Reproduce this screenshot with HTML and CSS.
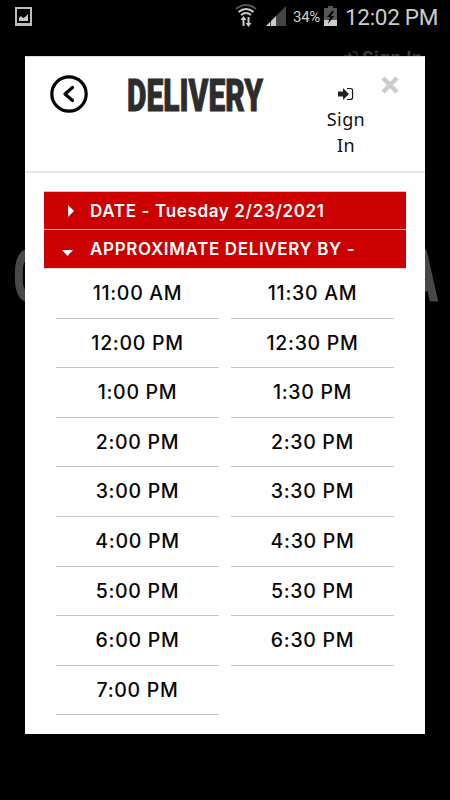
FILE: index.html
```html
<!DOCTYPE html>
<html lang="en">
<head>
  <meta charset="UTF-8">
  <meta name="viewport" content="width=device-width, initial-scale=1.0">
  <title>Delivery</title>
  <link rel="stylesheet" href="styles.css">
</head>
<body>
  <div class="status-bar">
    <svg class="picture" width="17" height="19" viewBox="0 0 17 19">
      <path fill="#bdbdbd" fill-rule="evenodd" d="M0 0h17v19H0zM2 2v14h13V2z"/>
      <path fill="#c8c8c8" d="M4 14v-3l2-2 2 2 2-1 3-3v7z"/>
    </svg>
    <svg class="wifi" width="22" height="24" viewBox="0 0 22 24">
      <path d="M1 5Q11-3 21 5" fill="none" stroke="#555" stroke-width="2"/>
      <path d="M3.500 8Q11 2 18.500 8M6 11Q11 7 16 11" fill="none" stroke="#ccc" stroke-width="2"/>
      <path fill="#ccc" d="M8.500 12l3 4h-2v6h-2v-6h-2zM13.500 23l-3-4h2v-6h2v6h2z"/>
    </svg>
    <svg class="signal" width="20" height="20" viewBox="0 0 20 20">
      <path fill="#444" d="M20 0v20H0z"/>
      <path fill="#ccc" d="M0 20l4-4v4zM5 20v-5l5-5v10z"/>
    </svg>
    <span class="percent">34%</span>
    <svg class="battery" width="13" height="20" viewBox="0 0 13 20">
      <path fill="#555" d="M4 0h5v2h4v18H0V2h4z"/>
      <path fill="#ccc" d="M0 14h13v6H0z"/>
      <path fill="#000" d="M8 5l-5 6h3l-2 7 6-8H7l3-5z"/>
    </svg>
    <span class="clock">12:02 PM</span>
  </div>

  <div class="page">
    <div class="page-signin">
      <svg width="14" height="12" viewBox="0 0 16 14">
        <path d="M0 5h5V1l6 6-6 6V9H0z" fill="currentColor"/>
        <path d="M10 1h3q2 0 2 2v8q0 2-2 2h-3" fill="none" stroke="currentColor" stroke-width="1.500"/>
      </svg>
      <span>Sign In</span>
    </div>
    <svg class="page-title" width="450" height="70" viewBox="0 0 450 70">
      <text x="14" y="59" textLength="27" lengthAdjust="spacingAndGlyphs">C</text>
      <text x="409" y="59" textLength="28" lengthAdjust="spacingAndGlyphs">A</text>
    </svg>
  </div>

  <div class="modal">
    <div class="modal-header">
      <svg class="back" width="38" height="38" viewBox="0 0 38 38">
        <circle cx="19" cy="19" r="17.200"/>
        <path d="M22.500 12.500L15 19l7.500 6.500"/>
      </svg>
      <svg class="title" width="140" height="44" viewBox="0 0 140 44">
        <text x="1" y="38" textLength="136" lengthAdjust="spacingAndGlyphs">DELIVERY</text>
      </svg>
      <div class="signin">
        <svg width="16" height="14" viewBox="0 0 16 14">
          <path d="M0 4.500h5V1l6 6-6 6V9.500H0z" fill="#222"/>
          <path d="M9 1.500h3.500q2 0 2 2v7q0 2-2 2H9" fill="none" stroke="#111" stroke-width="1.200"/>
        </svg>
        <span>Sign</span>
        <span>In</span>
      </div>
      <svg class="close" width="18" height="18" viewBox="0 0 18 18">
        <path d="M2 2l14 14M16 2L2 16"/>
      </svg>
    </div>
    <div class="modal-body">
      <div class="panel date">
        <svg width="14" height="12" viewBox="0 0 14 12"><path d="M7 0l6 6-6 6z"/></svg>
        <span>DATE - Tuesday 2/23/2021</span>
      </div>
      <div class="panel approx">
        <svg width="14" height="12" viewBox="0 0 14 12"><path d="M1 7h11l-5.500 6z"/></svg>
        <span>APPROXIMATE DELIVERY BY -</span>
      </div>
      <div class="times">
        <div class="time">11:00 AM</div>
        <div class="time">11:30 AM</div>
        <div class="time">12:00 PM</div>
        <div class="time">12:30 PM</div>
        <div class="time">1:00 PM</div>
        <div class="time">1:30 PM</div>
        <div class="time">2:00 PM</div>
        <div class="time">2:30 PM</div>
        <div class="time">3:00 PM</div>
        <div class="time">3:30 PM</div>
        <div class="time">4:00 PM</div>
        <div class="time">4:30 PM</div>
        <div class="time">5:00 PM</div>
        <div class="time">5:30 PM</div>
        <div class="time">6:00 PM</div>
        <div class="time">6:30 PM</div>
        <div class="time">7:00 PM</div>
      </div>
    </div>
  </div>
</body>
</html>
```
FILE: styles.css
```css
* {
  box-sizing: border-box;
}
body {
  margin: 0;
  height: 800px;
  background-color: #010101;
  font-family: Inter, "Liberation Sans", sans-serif;
  position: relative;
  overflow: hidden;
}
svg {
  display: block;
  flex: none;
  overflow: visible;
}

/* phone status bar */
.status-bar {
  display: flex;
  height: 31px;
  padding: 0 12px 0 15px;
  color: #ccc;
  font-family: Roboto, sans-serif;
  background-color: #000;
}
.picture {
  margin-top: 7px;
}
.wifi {
  margin: 4px 0 0 203px;
}
.signal {
  margin: 6px 0 0 9px;
}
.percent {
  flex: none;
  width: 31px;
  margin-left: 7px;
  font-size: 15px;
  line-height: 34px;
  letter-spacing: -0.3px;
}
.battery {
  margin-top: 6px;
}
.clock {
  margin-left: 8px;
  font-size: 22.5px;
  line-height: 35px;
  letter-spacing: -0.3px;
  white-space: nowrap;
}

/* dimmed page behind the modal */
.page {
  color: #3a3a3a;
}
.page-signin {
  display: flex;
  justify-content: flex-end;
  gap: 4px;
  padding: 17px 27px 0 0;
  font-size: 17px;
  font-weight: 700;
  line-height: 20px;
  letter-spacing: 0.6px;
}
.page-signin svg {
  margin-top: 3px;
}
.page-title {
  margin-top: 173px;
  fill: #484848;
  stroke: #484848;
  stroke-width: 3;
  font-family: Roboto, sans-serif;
  font-size: 68px;
  font-weight: 700;
}

.modal {
  position: absolute;
  left: 25px;
  top: 56px;
  width: 400px;
  height: 678px;
  background-color: #fff;
  border-top: 1px solid #ddd;
}
.modal-header {
  display: flex;
  height: 116px;
  padding: 0 26px 0 25px;
  border-bottom: 2px solid #e8e8e8;
}
.back {
  margin-top: 18px;
  fill: none;
  stroke: #000;
  stroke-width: 3.2;
  stroke-linecap: round;
  stroke-linejoin: round;
}
.title {
  margin: 16px 0 0 38px;
  fill: #2d2d2d;
  stroke: #2d2d2d;
  stroke-width: 0.9;
  font-family: Roboto, sans-serif;
  font-size: 45px;
  font-weight: 900;
}
.signin {
  display: flex;
  flex-direction: column;
  align-items: center;
  width: 50px;
  margin: 30px 0 0 55px;
  font-family: "Noto Sans", sans-serif;
  font-size: 18px;
  line-height: 26px;
  letter-spacing: 0.4px;
  color: #111;
}
.signin svg {
  margin-bottom: 5px;
}
.close {
  margin: 19px 0 0 10px;
  stroke: #ccc;
  stroke-width: 4.5;
}
.modal-body {
  padding: 18px 19px 0;
}
.panel {
  display: flex;
  align-items: center;
  height: 38px;
  padding: 0 0 0 17px;
  color: #fff;
  background-color: #c00;
  border-top: 1px solid #e9b5b5;
  font-size: 17px;
  font-weight: 600;
  letter-spacing: 0.65px;
  white-space: nowrap;
}
.panel svg {
  margin-right: 15px;
  fill: #fff;
}
.approx {
  height: 40px;
  border-bottom: 1px solid #ddd;
}
.times {
  display: grid;
  grid-template-columns: 163px 163px;
  grid-auto-rows: 49.6px;
  column-gap: 12px;
  padding: 0 12px;
}
.time {
  border-bottom: 1px solid #c4c4c4;
  color: #080808;
  font-size: 19.5px;
  font-weight: 500;
  letter-spacing: 0.7px;
  line-height: 48px;
  text-align: center;
}
```
